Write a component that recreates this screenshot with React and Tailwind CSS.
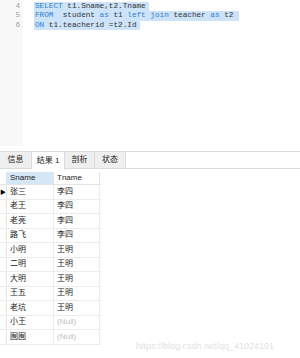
import React from 'react'

// ── SQL editor lines ─────────────────────────────────────────────────────────
const K = ({ children }) => <span className="text-[#2f80d1]">{children}</span>

const lines = [
  { n: 3, code: null, hl: 0 },
  { n: 4, code: <><K>SELECT</K> t1.Sname,t2.Tname</>, hl: 113 },
  { n: 5, code: <><K>FROM</K>  student <K>as</K> t1 <K>left</K> <K>join</K> teacher <K>as</K> t2</>, hl: 203 },
  { n: 6, code: <><K>ON</K> t1.teacherid =t2.Id</>, hl: 104 },
]

const rows = [
  ['张三', '李四'], ['老王', '李四'], ['老亮', '李四'], ['路飞', '李四'],
  ['小明', '王明'], ['二明', '王明'], ['大明', '王明'], ['王五', '王明'],
  ['老坑', '王明'], ['小王', null], ['囿囿', null],
]

const tabs = [
  { label: '信息', w: 'w-[32px]' },
  { label: '结果 1', w: 'w-[33px]', active: true },
  { label: '剖析', w: 'w-[30px]' },
  { label: '状态', w: 'w-[31px]' },
]

export default function App() {
  return (
    <div className="relative w-[300px] h-[358px] overflow-hidden bg-white font-['Liberation_Sans','Noto_Sans_CJK_SC',sans-serif] text-[#222]">

      {/* Editor */}
      <div className="flex h-[146px] overflow-hidden">
        <div className="w-[23px] bg-[#f8f8f8] shrink-0" />
        <div className="flex flex-col mt-[-8px] font-['Liberation_Mono',monospace] text-[7.7px] leading-[9.5px]">
          {lines.map(l => (
            <div key={l.n} className="flex h-[9.5px]">
              <span className="w-0 relative">
                <span className="absolute right-[3px] text-[#a0a0a0]">{l.n}</span>
              </span>
              <span className="ml-[12px] relative whitespace-pre text-[#333]">
                {l.hl > 0 && <span className="absolute left-[-1px] top-0 h-[9.5px] bg-[#cce3f9]" style={{ width: l.hl + 2 }} />}
                <span className="relative">{l.code}</span>
              </span>
            </div>
          ))}
        </div>
      </div>

      {/* Tabs */}
      <div className="mt-[5px] flex h-[18px] border-t border-b border-[#dcdcdc] text-[8px]">
        {tabs.map(t => (
          <div key={t.label}
            className={`${t.w} flex items-center justify-center border-r border-[#dcdcdc] ${t.active ? 'bg-white h-[18px] -mb-px' : 'bg-[#efefef]'}`}>
            {t.label}
          </div>
        ))}
      </div>

      {/* Grid */}
      <div className="mt-[3px] w-[101px] text-[8px]">
        <div className="flex h-[13px] border-b border-[#e4e4e4]">
          <div className="w-[7px] border-r border-[#e4e4e4]" />
          <div className="w-[46px] bg-[#d5e6f7] flex items-center pl-[3px]">Sname</div>
          <div className="w-[47px] flex items-center pl-[3px] border-l border-r border-[#e4e4e4]">Tname</div>
        </div>
        {rows.map((r, i) => (
          <div key={i} className="flex h-[14.5px] border-b border-[#ececec]">
            <div className="w-[7px] border-r border-[#e4e4e4] flex items-center justify-center text-[6px] leading-none text-black">
              {i === 0 ? '▶' : ''}
            </div>
            <div className="w-[46px] flex items-center pl-[3px]">{r[0]}</div>
            <div className={`w-[47px] flex items-center pl-[3px] border-l border-r border-[#ececec] ${r[1] ? '' : 'text-[#c0c0c0]'}`}>
              {r[1] ?? '(Null)'}
            </div>
          </div>
        ))}
      </div>

      {/* Watermark */}
      <div className="absolute left-[136px] top-[340px] text-[9px] text-[#e2e2e2] font-['Liberation_Sans',sans-serif]">
        https://blog.csdn.net/qq_41024101
      </div>
    </div>
  )
}
